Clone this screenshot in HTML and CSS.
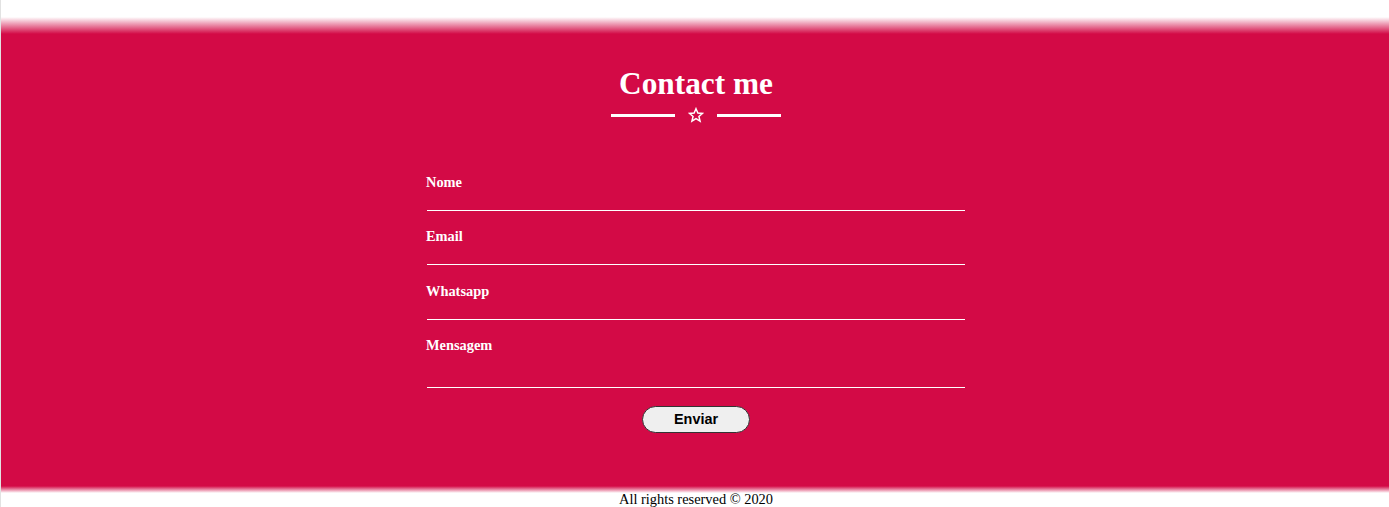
FILE: index.html
```html
<!DOCTYPE html>
<html lang="pt">
<head>
<meta charset="utf-8">
<title>Contact me</title>
<link rel="stylesheet" href="styles.css">
</head>
<body>
<div class="page">
  <section class="contact">
    <h1 class="title">Contact me</h1>
    <div class="divider">
      <span class="divider-line"></span>
      <svg class="star" width="16" height="16" viewBox="0 0 24 24" aria-hidden="true">
        <polygon points="12,2.5 14.8,9.1 21.8,9.6 16.4,14.2 18.1,21.1 12,17.3 5.9,21.1 7.6,14.2 2.2,9.6 9.2,9.1" fill="none" stroke="#fff" stroke-width="2.2" stroke-linejoin="miter"/>
      </svg>
      <span class="divider-line"></span>
    </div>
    <form class="form">
      <div class="field">
        <label class="label" for="nome">Nome</label>
        <input class="input" id="nome" type="text">
      </div>
      <div class="field">
        <label class="label" for="email">Email</label>
        <input class="input" id="email" type="email">
      </div>
      <div class="field">
        <label class="label" for="whats">Whatsapp</label>
        <input class="input" id="whats" type="text">
      </div>
      <div class="field">
        <label class="label" for="msg">Mensagem</label>
        <textarea class="input textarea" id="msg"></textarea>
      </div>
      <button class="submit" type="button">Enviar</button>
    </form>
  </section>
  <footer class="footer">All rights reserved © 2020</footer>
</div>
</body>
</html>
```
FILE: styles.css
```css
html, body {
  margin: 0;
  padding: 0;
  background: #fff;
}
.page {
  border-left: 1px solid #e2e2e2;
  min-height: 507px;
  box-sizing: border-box;
  padding-top: 17px;
  font-family: "Liberation Serif", "Times New Roman", serif;
}
.contact {
  background: linear-gradient(to bottom,
    #ffffff 0px,
    #d30a46 17px,
    #d30a46 calc(100% - 7px),
    #ffffff 100%);
  padding: 48px 0 60px 2px;
  display: flex;
  flex-direction: column;
  align-items: center;
  color: #fff;
}
.title {
  margin: 0;
  font-size: 31.3px;
  font-weight: bold;
  line-height: 37px;
}
.divider {
  display: flex;
  align-items: center;
  gap: 13px;
  margin-top: 5px;
  height: 16px;
}
.divider-line {
  width: 64px;
  height: 3px;
  background: #fff;
}
.star {
  display: block;
}
.form {
  width: 538px;
  margin-top: 51px;
  display: flex;
  flex-direction: column;
}
.field {
  display: flex;
  flex-direction: column;
  margin-bottom: 17.3px;
}
.label {
  font-size: 14.4px;
  font-weight: bold;
  line-height: 17px;
  margin-left: -1px;
}
.input {
  height: 20px;
  box-sizing: border-box;
  border: none;
  border-bottom: 1px solid #fff;
  background: transparent;
  outline: none;
  padding: 0;
  margin: 0;
  color: #fff;
}
.textarea {
  height: 34px;
  resize: none;
  font-family: inherit;
}
.field:last-of-type {
  margin-bottom: 18px;
}
.submit {
  align-self: center;
  width: 108px;
  height: 27px;
  border-radius: 14px;
  border: 1px solid #333;
  background: #efefef;
  font-family: "Liberation Sans", Arial, sans-serif;
  font-weight: bold;
  font-size: 14.4px;
  color: #000;
  padding: 0;
}
.footer {
  text-align: center;
  font-size: 14.4px;
  line-height: 16px;
  margin-top: -2px;
  padding-left: 2px;
  color: #000;
}
```
